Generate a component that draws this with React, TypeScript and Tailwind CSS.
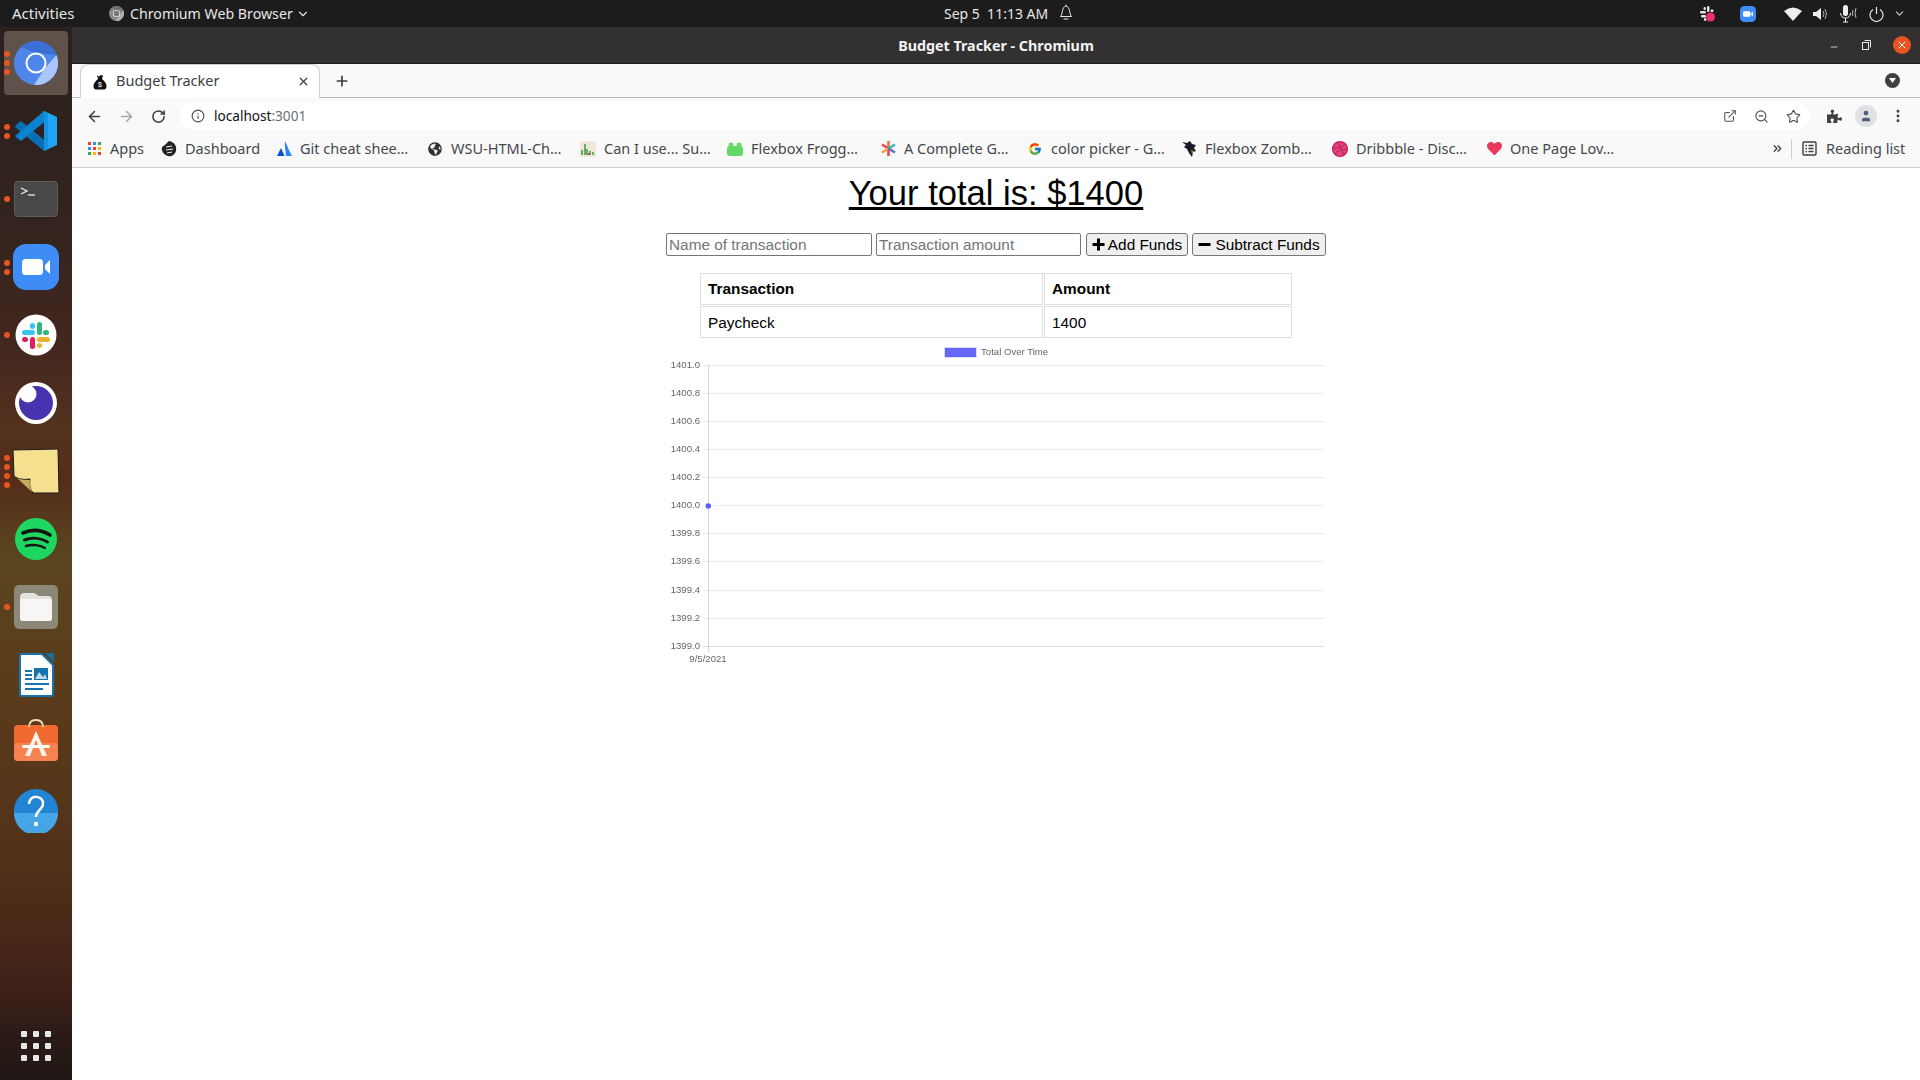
import React from "react";
import { ArrowLeft, ArrowRight, RotateCw, Info, ExternalLink, ZoomOut, Star, ChevronDown, X, Plus, MoreVertical, User, Minus, ChevronsRight } from "lucide-react";
import { FaPuzzlePiece, FaGlobeAmericas, FaDribbble, FaHeart } from "react-icons/fa";
import { FcGoogle } from "react-icons/fc";

const UI = "font-['Noto_Sans',sans-serif]";

function ChromiumIcon({ size = 44, mono = false }: { size?: number; mono?: boolean }) {
  const a = mono ? "#8a8a8a" : "#4f86ec";
  const b = mono ? "#6f6f6f" : "#3c6fd6";
  const c = mono ? "#b0b0b0" : "#a9c7fb";
  return (
    <svg width={size} height={size} viewBox="0 0 44 44">
      <circle cx="22" cy="22" r="22" fill={a} />
      <path d="M7 6 A22 22 0 0 1 42.5 14 L22 12 Z" fill={b} />
      <path d="M42.5 14 A22 22 0 0 1 20 44 L31 27 Z" fill={c} />
      <circle cx="22" cy="22" r="10.5" fill="#fff" />
      <circle cx="22" cy="22" r="8.5" fill={mono ? "#777" : "#4f86ec"} />
    </svg>
  );
}

function VSCode() {
  return (
    <svg width="42" height="42" viewBox="0 0 42 42">
      <path d="M2 14 L6 11 L33 33 L29 41 L0 17 Z" fill="#0a6fb5" />
      <path d="M0 26 L29 1 L33 9 L6 31 L2 28 Z" fill="#0a84d0" />
      <path d="M29 1 L42 7 V35 L29 41 L33 33 V9 Z" fill="#1fa6f4" />
      <path d="M29 1 L33 3 V39 L29 41 Z" fill="#1593e0" />
    </svg>
  );
}

function Terminal() {
  return (
    <div className="relative h-[36px] w-[44px] rounded-[4px] border border-[#5d5d5d] bg-[#484848]">
      <svg width="42" height="34" viewBox="0 0 42 34">
        <path d="M6 6 L12 9 L6 12" stroke="#eee" strokeWidth="1.3" fill="none" />
        <path d="M13 13 H20" stroke="#eee" strokeWidth="1.3" />
      </svg>
    </div>
  );
}

function ZoomApp({ size = 46 }: { size?: number }) {
  return (
    <svg width={size} height={size} viewBox="0 0 46 46">
      <rect width="46" height="46" rx="13" fill="#3f8cf6" />
      <rect x="9" y="15" width="21" height="16" rx="3.5" fill="#fff" />
      <path d="M32 21 L37 16 V30 L32 25 Z" fill="#fff" />
    </svg>
  );
}

function Slack() {
  return (
    <svg width="42" height="42" viewBox="0 0 42 42">
      <circle cx="21" cy="21" r="20.5" fill="#fff" />
      <rect x="7" y="16" width="13" height="5" rx="2.5" fill="#36c5f0" />
      <rect x="15" y="9" width="5" height="6" rx="2.5" fill="#36c5f0" />
      <rect x="22" y="8" width="5" height="13" rx="2.5" fill="#2eb67d" />
      <rect x="28" y="16" width="6" height="5" rx="2.5" fill="#2eb67d" />
      <rect x="22" y="23" width="13" height="5" rx="2.5" fill="#ecb22e" />
      <rect x="22" y="29" width="5" height="5" rx="2.5" fill="#ecb22e" />
      <rect x="15" y="23" width="5" height="12" rx="2.5" fill="#e01e5a" />
      <rect x="7" y="23" width="6" height="5" rx="2.5" fill="#e01e5a" />
    </svg>
  );
}

function SlackTray() {
  return (
    <svg width="16" height="16" viewBox="0 0 16 16">
      <rect x="0" y="5" width="6" height="2.4" rx="1.2" fill="#e8e8e8" />
      <rect x="3.5" y="1" width="2.4" height="3" rx="1.2" fill="#e8e8e8" />
      <rect x="7" y="0" width="2.4" height="6" rx="1.2" fill="#e8e8e8" />
      <rect x="10.5" y="3.5" width="3" height="2.4" rx="1.2" fill="#e8e8e8" />
      <rect x="1" y="9" width="5" height="2.4" rx="1.2" fill="#e8e8e8" />
      <rect x="4" y="12" width="2.4" height="3" rx="1.2" fill="#e8e8e8" />
      <circle cx="10.5" cy="11" r="4.5" fill="#ee2f6c" />
    </svg>
  );
}

function Eclipse() {
  return (
    <svg width="42" height="42" viewBox="0 0 42 42">
      <circle cx="21" cy="21" r="21" fill="#fff" />
      <circle cx="21" cy="21" r="17" fill="#4733ad" />
      <circle cx="13" cy="12" r="8.5" fill="#fff" />
    </svg>
  );
}

function Sticky() {
  return (
    <svg width="48" height="46" viewBox="0 0 48 46">
      <path d="M1 2 L46 1 L47 45 L22 45 C18 43 17 37 18 31 C12 32 5 31 2 28 Z" fill="#f5e08f" stroke="#1a1a1a" strokeWidth="1" />
      <path d="M5 30 C10 32 14 32 18 32 C17 36 18 40 20 44 Z" fill="#c6ad5f" />
    </svg>
  );
}

function Spotify() {
  return (
    <svg width="42" height="42" viewBox="0 0 42 42">
      <circle cx="21" cy="21" r="21" fill="#1ed760" />
      <path d="M8 15 C17 11 27 12 35 17" stroke="#191414" strokeWidth="3.6" fill="none" strokeLinecap="round" />
      <path d="M9.5 22 C17 19 26 20 32.5 24" stroke="#191414" strokeWidth="3" fill="none" strokeLinecap="round" />
      <path d="M11 28 C17 26 25 27 30 30" stroke="#191414" strokeWidth="2.4" fill="none" strokeLinecap="round" />
    </svg>
  );
}

function Files() {
  return (
    <svg width="44" height="44" viewBox="0 0 44 44">
      <rect width="44" height="44" rx="5" fill="#8d8778" />
      <path d="M6 13 Q6 8 10 8 H20 L25 11 H34 Q38 11 38 15 V33 Q38 36 35 36 H9 Q6 36 6 33 Z" fill="#e6e2dc" />
      <path d="M6 17 Q6 14 9 14 H35 Q38 14 38 17 V33 Q38 36 35 36 H9 Q6 36 6 33 Z" fill="#f7f6f5" />
    </svg>
  );
}

function Writer() {
  return (
    <svg width="36" height="44" viewBox="0 0 36 44">
      <path d="M2 3 Q2 1 4 1 H24 L35 12 V41 Q35 43 33 43 H4 Q2 43 2 41 Z" fill="#fff" stroke="#1872ab" strokeWidth="2" />
      <path d="M27 0 H36 V9 Z" fill="#1b6a9c" />
      <rect x="7" y="17" width="7" height="2" fill="#1872ab" />
      <rect x="7" y="21" width="7" height="2" fill="#1872ab" />
      <rect x="7" y="25" width="7" height="2" fill="#1872ab" />
      <rect x="7" y="30" width="24" height="2" fill="#1872ab" />
      <rect x="7" y="35" width="18" height="2" fill="#1872ab" />
      <rect x="16" y="15" width="14" height="12" fill="#1872ab" />
      <path d="M17 26 L21 19 L25 24 L27 21 L29 26 Z" fill="#bcd8ea" />
    </svg>
  );
}

function Store() {
  return (
    <svg width="44" height="42" viewBox="0 0 44 42" className="-translate-y-[3px]">
      <rect y="6" width="44" height="36" rx="4" fill="#f0692f" />
      <rect y="24" width="44" height="18" rx="4" fill="#f5824f" />
      <path d="M15 8 Q15 1 22 1 Q29 1 29 8" stroke="#f7dcb4" strokeWidth="1.8" fill="none" />
      <path d="M22 12 L33 37 H28 L22 21 L16 37 H11 Z" fill="#fff3ea" />
      <rect x="8" y="26" width="28" height="3" rx="1.5" fill="#fff" />
    </svg>
  );
}

function Help() {
  return (
    <svg width="44" height="44" viewBox="0 0 44 44">
      <circle cx="22" cy="22" r="22" fill="#2284d4" />
      <path d="M0 24 H44 A22 22 0 0 1 0 24 Z" fill="#46a5e6" />
      <path d="M15 15 C15 5 30 6 29 15 C29 21 22 21 22 28" stroke="#fff" strokeWidth="2.5" fill="none" />
      <circle cx="22" cy="35" r="2.2" fill="#fff" />
    </svg>
  );
}

function DockItem({ dots, active, children }: { dots: number; active?: boolean; children: React.ReactNode }) {
  return (
    <div className="relative flex h-[68px] w-full shrink-0 items-center justify-center">
      {active && <div className="absolute left-[4px] top-[2px] h-[64px] w-[64px] rounded-[4px] bg-[#5f524b]" />}
      <div className="absolute left-[4px] top-0 flex h-full flex-col items-center justify-center gap-[3px]">
        {Array.from({ length: dots }).map((_, i) => (
          <span key={i} className="h-[6px] w-[6px] rounded-full bg-[#e95420]" />
        ))}
      </div>
      <div className="relative flex items-center justify-center">{children}</div>
    </div>
  );
}

function Dock() {
  return (
    <div className="flex w-[72px] shrink-0 flex-col bg-[linear-gradient(180deg,#2a211e_0%,#33231e_18%,#42271f_30%,#53321e_38%,#552c1a_43%,#5a451e_50%,#5a3a1a_65%,#55351a_74%,#4a2a18_85%,#3d1f18_92%,#2a1a17_96%,#211815_100%)] pt-[2px]">
      <DockItem dots={3} active><ChromiumIcon /></DockItem>
      <DockItem dots={2}><VSCode /></DockItem>
      <DockItem dots={1}><Terminal /></DockItem>
      <DockItem dots={2}><ZoomApp /></DockItem>
      <DockItem dots={1}><Slack /></DockItem>
      <DockItem dots={0}><Eclipse /></DockItem>
      <DockItem dots={4}><Sticky /></DockItem>
      <DockItem dots={0}><Spotify /></DockItem>
      <DockItem dots={1}><Files /></DockItem>
      <DockItem dots={0}><Writer /></DockItem>
      <DockItem dots={0}><Store /></DockItem>
      <DockItem dots={0}><Help /></DockItem>
      <div className="mt-auto mb-[19px] grid w-[30px] grid-cols-3 gap-[6px] self-center">
        {Array.from({ length: 9 }).map((_, i) => (
          <span key={i} className="h-[6px] w-[6px] rounded-[1px] bg-[#e8e8e8]" />
        ))}
      </div>
    </div>
  );
}

function TopBar() {
  return (
    <div className={`${UI} relative flex h-[27px] shrink-0 items-center bg-[#1c1c1c] text-[14.2px] text-[#e6e6e6]`}>
      <span className="ml-[12px] w-[97px] shrink-0 text-[15px]">Activities</span>
      <ChromiumIcon size={15} mono />
      <span className="ml-[6px] whitespace-nowrap">Chromium Web Browser</span>
      <ChevronDown size={14} className="ml-[3px]" />
      <div className="absolute left-[944px] flex items-center">
        <span className="whitespace-nowrap text-[14px]">Sep 5&nbsp;&nbsp;11:13 AM</span>
        <svg className="ml-[11px] -translate-y-[1px]" width="14" height="17" viewBox="0 0 14 17" fill="none" stroke="#e6e6e6" strokeWidth="1">
          <path d="M1.5 12.5 C4 10 2.5 3 7 2 C11.5 3 10 10 12.5 12.5 Z" />
          <path d="M4.5 15 H9.5" />
          <path d="M7 .5 V2" />
        </svg>
      </div>
      <div className="ml-auto flex items-center">
        <SlackTray />
        <span className="ml-[24px]"><ZoomApp size={16} /></span>
        <svg className="ml-[28px]" width="18" height="14" viewBox="0 0 18 14"><path d="M0 4 Q9 -3 18 4 L9 14 Z" fill="#eee" /></svg>
        <svg className="ml-[11px]" width="15" height="14" viewBox="0 0 15 14" fill="none"><path d="M0 5 H3 L8 1 V13 L3 9 H0 Z" fill="#eee" /><path d="M10 4 Q12 7 10 10 M12 2 Q15 7 12 12" stroke="#aaa" /></svg>
        <svg className="ml-[11px]" width="19" height="18" viewBox="0 0 19 18" fill="none"><rect x="4" y="0" width="5" height="11" rx="2.5" fill="#eee" /><path d="M1.5 8 Q2 13 6.5 13 Q11 13 11.5 8 M6.5 13 V17 M4 17 H9" stroke="#eee" /><path d="M14 5 Q12.5 8 14 11 M17 3 Q15 8 17 13" stroke="#bbb" /></svg>
        <svg className="ml-[11px]" width="15" height="16" viewBox="0 0 15 16" fill="none" stroke="#e6e6e6" strokeWidth="1.2"><path d="M7.5 1 V8" /><path d="M4 3.5 A6.5 6.5 0 1 0 11 3.5" /></svg>
        <ChevronDown size={13} className="ml-[9px] mr-[14px] text-[#cfcfcf]" />
      </div>
    </div>
  );
}

function TitleBar() {
  return (
    <div className={`${UI} relative flex h-[37px] shrink-0 items-center justify-center border-b border-[#1f1f1f] bg-[#323031] pt-[1px] text-[14.3px] font-bold text-[#f2f2f2]`}>
      <span>Budget Tracker - Chromium</span>
      <div className="absolute right-[9px] top-0 flex h-full items-center text-[#e8e8e8]">
        <Minus size={10} strokeWidth={2} className="ml-[1px] mt-[4px]" />
        <svg className="ml-[23px]" width="9" height="10" viewBox="0 0 9 10" fill="none" stroke="#e8e8e8"><rect x=".5" y="2.5" width="6" height="7" /><path d="M2.5 .5 H8.5 V7.5" /></svg>
        <span className="ml-[22px] flex h-[18px] w-[18px] items-center justify-center rounded-full bg-[#e95420]"><X size={12} strokeWidth={2} className="text-white" /></span>
      </div>
    </div>
  );
}

function TabStrip() {
  return (
    <div className={`${UI} flex h-[34px] shrink-0 items-end border-b border-[#bdbdbd] bg-[#f9f9f9] pl-[8px] text-[14.5px]`}>
      <div className="relative -mb-px flex h-[34px] w-[240px] items-center rounded-t-[8px] border border-b-0 border-[#cfcfcf] bg-white pl-[12px]">
        <svg width="14" height="16" viewBox="0 0 14 16"><path d="M4 1 L6 2.5 L8 1 L10 1.5 L9 5 Q14 9 13.5 13 Q13 15.5 11 15.5 H3 Q1 15.5 .5 13 Q0 9 5 5 Z" fill="#111" /><text x="7" y="13" fontSize="7" fill="#fff" textAnchor="middle" fontFamily="Liberation Sans">$</text></svg>
        <span className="ml-[9px] -mt-[2px] whitespace-nowrap text-[#3c4043]">Budget Tracker</span>
        <X size={13} strokeWidth={2.4} className="absolute right-[9px] top-[10px] text-[#3c4043]" />
      </div>
      <div className="flex h-full items-center pl-[14px]"><Plus size={16} strokeWidth={2.6} className="text-[#3c4043]" /></div>
      <div className="ml-auto mr-[20px] flex h-full items-center">
        <span className="flex h-[15px] w-[15px] items-center justify-center rounded-full bg-[#3c4043]">
          <svg width="7" height="5" viewBox="0 0 7 5"><path d="M0 0 H7 L3.5 5 Z" fill="#fff" /></svg>
        </span>
      </div>
    </div>
  );
}

function Toolbar() {
  return (
    <div className={`${UI} flex h-[32px] shrink-0 items-end bg-[#f9f9f9] text-[13.6px]`}>
      <div className="flex h-[28px] w-full items-center">
        <ArrowLeft size={17} strokeWidth={2.2} className="ml-[14px] text-[#3c4043]" />
        <ArrowRight size={17} strokeWidth={2.2} className="ml-[15px] text-[#a8a8a8]" />
        <RotateCw size={15} strokeWidth={2.4} className="ml-[16px] text-[#3c4043]" />
        <div className="ml-[14px] flex h-[28px] w-[1630px] items-center rounded-full bg-white pl-[11px]">
          <Info size={14} strokeWidth={2} className="text-[#4d5156]" />
          <span className="ml-[9px] text-[#111]">localhost<span className="text-[#6b6f73]">:3001</span></span>
          <div className="ml-auto flex items-center text-[#4d5156]">
            <ExternalLink size={14} strokeWidth={1.8} />
            <ZoomOut size={15} strokeWidth={1.8} className="ml-[17px]" />
            <Star size={15} strokeWidth={1.8} className="ml-[17px] mr-[9px]" />
          </div>
        </div>
        <FaPuzzlePiece size={15} className="ml-[17px] text-[#3c4043]" />
        <span className="ml-[13px] flex h-[22px] w-[22px] items-center justify-center rounded-full bg-[#dfe1e5]"><User size={14} fill="#4e5d78" strokeWidth={0} /></span>
        <MoreVertical size={16} strokeWidth={2.4} className="ml-[13px] text-[#3c4043]" />
      </div>
    </div>
  );
}

function Bookmark({ icon, label, w }: { icon: React.ReactNode; label: string; w: string }) {
  return (
    <div className="flex items-center">
      <span className="flex h-[16px] w-[16px] items-center justify-center">{icon}</span>
      <span className={`ml-[8px] whitespace-nowrap text-[#45484c] ${w}`}>{label}</span>
    </div>
  );
}

function Bookmarks() {
  const apps = ["#ea4335", "#4285f4", "#34a853", "#4285f4", "#ea4335", "#fbbc05", "#34a853", "#fbbc05", "#ea4335"];
  return (
    <div className={`${UI} flex h-[38px] shrink-0 items-center border-b border-[#cfcfcf] bg-[#f9f9f9] pl-[14px] text-[14.5px]`}>
      <div className="flex gap-x-[17px]">
        <Bookmark w="w-[34px]" label="Apps" icon={<span className="grid grid-cols-3 gap-[2px]">{apps.map((c, i) => <span key={i} style={{ background: c }} className="h-[3px] w-[3px]" />)}</span>} />
        <Bookmark w="w-[74px]" label="Dashboard" icon={<svg width="16" height="16" viewBox="0 0 16 16"><path d="M8 0 C14 1 16 6 15 10 C14 14 10 16 7 15 C3 14 0 10 1 6 C3 5 5 3 8 0 Z" fill="#222" /><path d="M5 6 L11 5 M5 9 L12 8 M6 12 L11 11" stroke="#f5f5f5" /></svg>} />
        <Bookmark w="w-[110px]" label="Git cheat shee…" icon={<svg width="15" height="15" viewBox="0 0 15 15"><path d="M8 0 C10 4 12 10 15 15 H9 C9 10 7 5 8 0 Z" fill="#2684ff" /><path d="M4 7 L7.5 15 H0 Z" fill="#0052cc" /></svg>} />
        <Bookmark w="w-[112px]" label="WSU-HTML-Ch…" icon={<FaGlobeAmericas size={14} className="text-[#2f3337]" />} />
        <Bookmark w="w-[106px]" label="Can I use... Su…" icon={<svg width="16" height="16" viewBox="0 0 16 16"><rect width="16" height="16" fill="#efe8d8" /><path d="M2 14 V9 M5 14 V3 M7 14 V8 M10 14 V10 M13 14 V11" stroke="#4a9c4a" strokeWidth="1.6" /><path d="M9 14 V12" stroke="#c44" strokeWidth="2" /></svg>} />
        <Bookmark w="w-[112px]" label="Flexbox Frogg…" icon={<svg width="16" height="14" viewBox="0 0 16 14"><circle cx="4" cy="3" r="2.5" fill="#6bdc6b" /><circle cx="12" cy="3" r="2.5" fill="#6bdc6b" /><rect y="4" width="16" height="10" rx="3" fill="#63d763" /></svg>} />
        <Bookmark w="w-[106px]" label="A Complete G…" icon={<svg width="15" height="15" viewBox="0 0 15 15" strokeWidth="2.6"><path d="M7.5 0 V7.5" stroke="#f06a3a" /><path d="M7.5 7.5 V15" stroke="#e8455a" /><path d="M1 3.5 L7.5 7.5" stroke="#e8455a" /><path d="M14 3.5 L7.5 7.5" stroke="#3eb4b4" /><path d="M1 11.5 L7.5 7.5" stroke="#f0a03a" /><path d="M14 11.5 L7.5 7.5" stroke="#5a6fc0" /></svg>} />
        <Bookmark w="w-[113px]" label="color picker - G…" icon={<FcGoogle size={14} />} />
        <Bookmark w="w-[110px]" label="Flexbox Zomb…" icon={<svg width="15" height="16" viewBox="0 0 15 16"><path d="M0 1 L5 2 L8 0 L10 3 L14 4 L12 7 L14 10 L11 11 L10 16 L7 12 L5 8 L2 6 L4 4 Z" fill="#1a1a2a" /><path d="M9 9 L12 10 L10 13 Z" fill="#8a9a3a" /></svg>} />
        <Bookmark w="w-[113px]" label="Dribbble - Disc…" icon={<span className="h-[16px] w-[16px] rounded-full bg-[#e0457b]"><FaDribbble size={16} className="text-[#c32361]" /></span>} />
        <Bookmark w="w-[108px]" label="One Page Lov…" icon={<FaHeart size={15} className="text-[#e93a5d]" />} />
      </div>
      <ChevronsRight size={13} strokeWidth={2.4} className="ml-[153px] text-[#3c4043]" />
      <span className="ml-[7px] h-[20px] w-px bg-[#cfcfcf]" />
      <svg className="ml-[10px]" width="15" height="15" viewBox="0 0 15 15" fill="none" stroke="#3c4043" strokeWidth="1.4"><rect x="1" y="1" width="13" height="13" rx="1" /><path d="M3.5 4.5 H5 M6.5 4.5 H11.5 M3.5 7.5 H5 M6.5 7.5 H11.5 M3.5 10.5 H5 M6.5 10.5 H11.5" /></svg>
      <span className="ml-[9px] whitespace-nowrap text-[#45484c]">Reading list</span>
    </div>
  );
}

const ticks = ["1401.0", "1400.8", "1400.6", "1400.4", "1400.2", "1400.0", "1399.8", "1399.6", "1399.4", "1399.2", "1399.0"];

function Chart() {
  return (
    <svg width="664" height="340" viewBox="0 0 664 340" className="mt-[1px] block blur-[0.3px]" fontFamily="Liberation Sans" fill="#666">
      <rect x="280.5" y="7.5" width="32" height="10" fill="#6666ff" stroke="#dcdcf5" />
      <text x="317" y="14.5" fontSize="9.6">Total Over Time</text>
      {ticks.map((t, i) => {
        const y = Math.round(25 + i * 28.07) + 0.5;
        return (
          <g key={t}>
            <line x1="39" x2="660" y1={y} y2={y} stroke={i === 10 ? "#dcdcdc" : "#ececec"} />
            <text x="36" y={y + 2.5} fontSize="9.6" textAnchor="end">{t}</text>
          </g>
        );
      })}
      <line x1="44.5" x2="44.5" y1="25" y2="312" stroke="#d6d6d6" />
      <circle cx="44.3" cy="166" r="2.7" fill="#5c5cff" />
      <text x="44" y="322" fontSize="9.6" textAnchor="middle">9/5/2021</text>
    </svg>
  );
}

function PlusGlyph() {
  return <svg width="13" height="13" viewBox="0 0 13 13"><path d="M5 0.5 H8 V5 H12.5 V8 H8 V12.5 H5 V8 H0.5 V5 H5 Z" fill="#000" /></svg>;
}

function MinusGlyph() {
  return <svg width="13" height="13" viewBox="0 0 13 13"><rect x="0.5" y="5" width="12" height="3" rx="0.5" fill="#000" /></svg>;
}

function Page() {
  const cell = "h-[32px] border border-[#dedede] px-[7px] text-left align-middle text-[15.36px] leading-none";
  return (
    <div className="flex flex-1 flex-col items-center bg-white font-['Liberation_Sans',Arial,sans-serif] text-black">
      <h1 className="mt-[5px] text-[34.56px] leading-[41px] font-normal underline">Your total is: $1400</h1>
      <div className="mt-[19px] flex h-[23px] items-stretch text-[15.36px]">
        <input readOnly placeholder="Name of transaction" className="h-[23px] w-[206px] rounded-[2px] border border-[#767676] px-[2px] text-[15.36px] placeholder:text-[#757575]" />
        <input readOnly placeholder="Transaction amount" className="ml-[4px] h-[23px] w-[205px] rounded-[2px] border border-[#767676] px-[2px] text-[15.36px] placeholder:text-[#757575]" />
        <button className="ml-[5px] flex h-[23px] w-[102px] items-center justify-center gap-[3px] rounded-[3px] border border-[#767676] bg-[#efefef]"><PlusGlyph />Add Funds</button>
        <button className="ml-[4px] flex h-[23px] w-[134px] items-center justify-center gap-[4px] rounded-[3px] border border-[#767676] bg-[#efefef]"><MinusGlyph />Subtract Funds</button>
      </div>
      <table className="mt-[16px] w-[594px] table-fixed border-separate border-spacing-[1px]">
        <colgroup><col className="w-[343px]" /><col /></colgroup>
        <thead>
          <tr><th className={`${cell} font-bold`}>Transaction</th><th className={`${cell} font-bold`}>Amount</th></tr>
        </thead>
        <tbody>
          <tr><td className={`${cell} pt-[2px]`}>Paycheck</td><td className={`${cell} pt-[2px]`}>1400</td></tr>
        </tbody>
      </table>
      <Chart />
    </div>
  );
}

export default function App() {
  return (
    <div className="flex h-screen w-screen flex-col overflow-hidden bg-white">
      <TopBar />
      <div className="flex min-h-0 flex-1">
        <Dock />
        <div className="flex min-w-0 flex-1 flex-col">
          <TitleBar />
          <TabStrip />
          <Toolbar />
          <Bookmarks />
          <Page />
        </div>
      </div>
    </div>
  );
}
